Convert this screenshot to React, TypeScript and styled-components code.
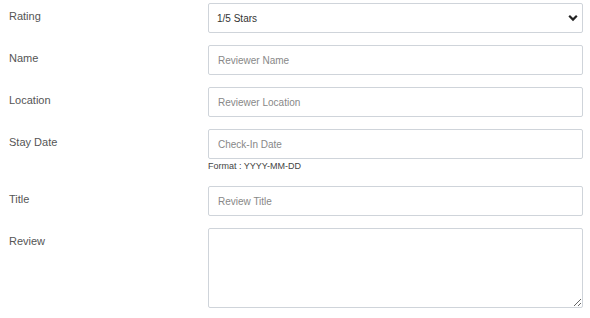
import styled, { createGlobalStyle } from "styled-components";

const GlobalStyle = createGlobalStyle`
  html, body {
    margin: 0;
    background: #fff;
    font-family: "Liberation Sans", Arial, sans-serif;
  }
`;

const Form = styled.form`
  padding: 3px 0 0 9px;
`;

const Row = styled.div`
  display: grid;
  grid-template-columns: 199px 375px;
  margin-bottom: 12px;
`;

const Label = styled.label`
  padding-top: 6px;
  font-size: 11px;
  line-height: 14px;
  color: #555;
`;

const Field = styled.div`
  position: relative;
`;

const boxStyles = `
  display: block;
  box-sizing: border-box;
  width: 375px;
  border: 1px solid #cfd4da;
  border-radius: 2px;
  background: #fff;
  font-family: "Liberation Sans", Arial, sans-serif;
  font-size: 10px;
  color: #333;
  outline: none;
`;

const Input = styled.input`
  ${boxStyles}
  height: 30px;
  padding: 0 9px;
  &::placeholder {
    color: #888;
  }
`;

const Select = styled.select`
  ${boxStyles}
  height: 30px;
  padding: 0 8px;
  appearance: none;
  -webkit-appearance: none;
`;

const Chevron = styled.svg`
  position: absolute;
  right: 5px;
  top: 11px;
  pointer-events: none;
`;

const TextArea = styled.textarea`
  ${boxStyles}
  height: 80px;
  padding: 6px 9px;
  resize: vertical;
`;

const Hint = styled.div`
  font-size: 9px;
  line-height: 15px;
  color: #444;
`;

export default function App() {
  return (
    <>
      <GlobalStyle />
      <Form>
        <Row>
          <Label>Rating</Label>
          <Field>
            <Select defaultValue="1">
              <option value="1">1/5 Stars</option>
              <option value="2">2/5 Stars</option>
              <option value="3">3/5 Stars</option>
              <option value="4">4/5 Stars</option>
              <option value="5">5/5 Stars</option>
            </Select>
            <Chevron width="10" height="8" viewBox="0 0 10 8">
              <path d="M1.2 1.8 L5 5.6 L8.8 1.8" fill="none" stroke="#222" strokeWidth="2.2" />
            </Chevron>
          </Field>
        </Row>
        <Row>
          <Label>Name</Label>
          <Input placeholder="Reviewer Name" />
        </Row>
        <Row>
          <Label>Location</Label>
          <Input placeholder="Reviewer Location" />
        </Row>
        <Row>
          <Label>Stay Date</Label>
          <Field>
            <Input placeholder="Check-In Date" />
            <Hint>Format : YYYY-MM-DD</Hint>
          </Field>
        </Row>
        <Row>
          <Label>Title</Label>
          <Input placeholder="Review Title" />
        </Row>
        <Row>
          <Label>Review</Label>
          <TextArea />
        </Row>
      </Form>
    </>
  );
}
